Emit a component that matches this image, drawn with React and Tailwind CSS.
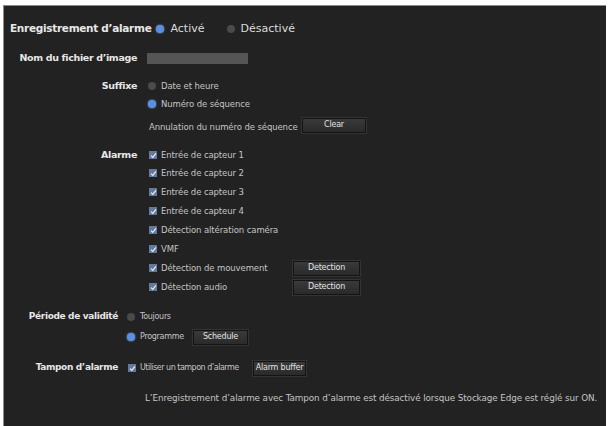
import React from "react";

const F = { fontFamily: '"DejaVu Sans", Verdana, sans-serif' };

function Radio({ on }) {
  return (
    <span
      className={
        "inline-block w-[8px] h-[8px] rounded-full shrink-0 " +
        (on ? "bg-[#5b8fe0] shadow-[0_0_2px_#7aa7ee]" : "bg-[#4a4a4a]")
      }
    />
  );
}

function Check() {
  return (
    <span className="inline-flex items-center justify-center w-[8px] h-[8px] bg-[#647a9c] shrink-0">
      <svg width="7" height="7" viewBox="0 0 8 8">
        <path d="M1.2 4.2 L3.2 6.2 L6.8 1.6" fill="none" stroke="#e8eef8" strokeWidth="1.4" />
      </svg>
    </span>
  );
}

function Btn({ children, w }) {
  return (
    <span
      className={
        "inline-flex items-center justify-center shrink-0 whitespace-nowrap h-[15px] text-[8px] tracking-[-0.2px] text-[#e2e2e2] border border-[#141414] bg-gradient-to-b from-[#3a3a3a] to-[#2a2a2a] shadow-[0_0_0_1px_#333] " +
        w
      }
    >
      {children}
    </span>
  );
}

function Label({ children, w, cls = "text-[9.5px]" }) {
  return (
    <div
      className={
        "shrink-0 whitespace-nowrap text-right font-bold text-[#e6e6e6] tracking-[-0.35px] " + cls + " " + w
      }
    >
      {children}
    </div>
  );
}

function Opt({ children, cls = "text-[8.5px] tracking-[-0.1px]" }) {
  return <span className={"whitespace-nowrap text-[#c4c4c4] " + cls}>{children}</span>;
}

const SM = "text-[8px] tracking-[-0.3px]";

export default function App() {
  return (
    <div className="w-[609px] h-[426px] bg-white overflow-hidden" style={F}>
      <div className="mt-[5px] ml-[3px] mr-[3px] h-[421px] bg-[#222222] border-l border-t border-[#8a8a8a] flex flex-col">
        {/* row 1 */}
        <div className="mt-[14px] h-[18px] flex items-center pl-[6px]">
          <span className="whitespace-nowrap font-bold text-[10.5px] text-[#e6e6e6] tracking-[-0.3px]">
            Enregistrement d’alarme
          </span>
          <span className="ml-[5px] flex items-center gap-[6px]">
            <Radio on />
            <span className="text-[11px] text-[#dcdcdc]">Activé</span>
          </span>
          <span className="ml-[22px] flex items-center gap-[6px]">
            <Radio />
            <span className="text-[11px] text-[#dcdcdc]">Désactivé</span>
          </span>
        </div>
        {/* row 2 */}
        <div className="mt-[11px] h-[18px] flex items-center">
          <Label w="w-[133px]">Nom du fichier d’image</Label>
          <span className="ml-[10px] w-[101px] h-[11px] bg-[#555555]" />
        </div>
        {/* Suffixe */}
        <div className="mt-[10px] h-[18px] flex items-center">
          <Label w="w-[133px]">Suffixe</Label>
          <span className="ml-[11px] flex items-center gap-[5px]">
            <Radio />
            <Opt>Date et heure</Opt>
          </span>
        </div>
        <div className="h-[18px] flex items-center pl-[144px]">
          <span className="flex items-center gap-[5px]">
            <Radio on />
            <Opt>Numéro de séquence</Opt>
          </span>
        </div>
        <div className="mt-[3px] h-[18px] flex items-center pl-[145px]">
          <span className="w-[153px] shrink-0">
            <Opt>Annulation du numéro de séquence</Opt>
          </span>
          <Btn w="w-[64px]">Clear</Btn>
        </div>
        {/* Alarme */}
        {[
          ["Entrée de capteur 1", 12],
          ["Entrée de capteur 2", 0],
          ["Entrée de capteur 3", 1],
          ["Entrée de capteur 4", 1],
          ["Détection altération caméra", 1],
          ["VMF", 1],
          ["Détection de mouvement", 1],
          ["Détection audio", 1],
        ].map(([t, m], i) => (
          <div
            key={t}
            className={
              "h-[18px] flex items-center " +
              (m === 12 ? "mt-[12px]" : m === 1 ? "mt-[1px]" : "mt-0")
            }
          >
            <Label w="w-[133px]">{i === 0 ? "Alarme" : ""}</Label>
            <span className="ml-[12px] flex items-center gap-[4px] w-[144px] shrink-0">
              <Check />
              <Opt>{t}</Opt>
            </span>
            {i >= 6 && <Btn w="w-[67px]">Detection</Btn>}
          </div>
        ))}
        {/* Période */}
        <div className="mt-[12px] h-[18px] flex items-center">
          <Label w="w-[114px]" cls="text-[9px]">Période de validité</Label>
          <span className="ml-[9px] flex items-center gap-[5px]">
            <Radio />
            <Opt cls={SM}>Toujours</Opt>
          </span>
        </div>
        <div className="mt-[2px] h-[18px] flex items-center pl-[123px]">
          <span className="flex items-center gap-[5px] w-[66px] shrink-0">
            <Radio on />
            <Opt cls={SM}>Programme</Opt>
          </span>
          <Btn w="w-[55px]">Schedule</Btn>
        </div>
        {/* Tampon */}
        <div className="mt-[13px] h-[18px] flex items-center">
          <Label w="w-[114px]" cls="text-[9px]">Tampon d’alarme</Label>
          <span className="ml-[10px] flex items-center gap-[4px] w-[125px] shrink-0">
            <Check />
            <Opt cls="text-[8px] tracking-[-0.5px]">Utiliser un tampon d’alarme</Opt>
          </span>
          <Btn w="w-[53px]">Alarm buffer</Btn>
        </div>
        <div className="mt-[13px] h-[18px] flex items-center pl-[141px]">
          <span className="whitespace-nowrap text-[8.8px] text-[#c4c4c4] tracking-[-0.1px]">
            L’Enregistrement d’alarme avec Tampon d’alarme est désactivé lorsque Stockage Edge est réglé sur ON.
          </span>
        </div>
      </div>
    </div>
  );
}
